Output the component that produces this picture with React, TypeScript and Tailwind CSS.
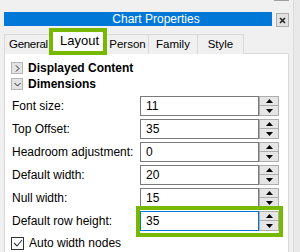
import { ReactNode } from 'react';

const FONT = { fontFamily: '"Liberation Sans", Arial, sans-serif' };

const ROWS = [
  { label: 'Font size:', value: '11' },
  { label: 'Top Offset:', value: '35' },
  { label: 'Headroom adjustment:', value: '0' },
  { label: 'Default width:', value: '20' },
  { label: 'Null width:', value: '15' },
  { label: 'Default row height:', value: '35', focused: true },
];

function Tri({ up }: { up?: boolean }) {
  return (
    <svg width="7" height="4" viewBox="0 0 7 4">
      {up ? <path d="M3.5 0 L7 4 L0 4 Z" fill="#000" /> : <path d="M0 0 L7 0 L3.5 4 Z" fill="#000" />}
    </svg>
  );
}

function Spinner() {
  return (
    <div className="flex flex-col w-[20px] h-[20px]">
      <div className="h-[10px] flex items-center justify-center bg-[#e6e6e6] border border-[#adadad]">
        <Tri up />
      </div>
      <div className="h-[10px] flex items-center justify-center bg-[#e6e6e6] border border-[#adadad] border-t-0">
        <Tri />
      </div>
    </div>
  );
}

function Highlight({ children, className }: { children: ReactNode; className: string }) {
  return (
    <div className="relative">
      {children}
      <span className={`pointer-events-none absolute border-[4px] border-[#77b900] ${className}`} />
    </div>
  );
}

function Row({ label, value, focused }: { label: string; value: string; focused?: boolean }) {
  const field = (
    <div className="flex items-center">
      <div
        className={`w-[119px] h-[20px] bg-white flex items-center pl-[5px] text-[12px] text-black border ${
          focused ? 'border-[#0078d7]' : 'border-[#7a7a7a]'
        }`}
      >
        {value}
      </div>
      <Spinner />
    </div>
  );
  return (
    <div className="flex items-center h-[20px] mb-[3px]">
      <div className="w-[135px] pl-[7px] text-[12px] text-black">{label}</div>
      {focused ? <Highlight className="-left-[4px] -top-[5px] -right-[4px] -bottom-[6px]">{field}</Highlight> : field}
    </div>
  );
}

function Expander({ open, label }: { open?: boolean; label: string }) {
  return (
    <div className="flex items-center h-[16px] pl-[6px]">
      <div className="w-[12px] h-[12px] bg-[#e3e3e3] border border-[#b5b5b5] flex items-center justify-center">
        <svg width="7" height="7" viewBox="0 0 7 7">
          {open ? (
            <path d="M0.5 2 L3.5 5 L6.5 2" stroke="#222" fill="none" strokeWidth="1" />
          ) : (
            <path d="M2 0.5 L5 3.5 L2 6.5" stroke="#222" fill="none" strokeWidth="1" />
          )}
        </svg>
      </div>
      <span className="ml-[5px] text-[12px] font-bold text-black">{label}</span>
    </div>
  );
}

export default function App() {
  return (
    <div className="w-[300px] h-[252px] bg-[#f0f0f0] overflow-hidden flex" style={FONT}>
      <div className="w-[289px] pl-[4px] flex flex-col">
        {/* top strip */}
        <div className="h-[12px] flex justify-end">
          <div className="w-[15px] h-[1px] bg-[#a0a0a0]" />
        </div>

        {/* title bar */}
        <div className="flex items-start h-[15px]">
          <div className="w-[268px] h-[14px] bg-[#0078d7] text-white text-[12px] leading-[14px] text-center pl-[36px]">
            Chart Properties
          </div>
          <div className="ml-[4px] mt-[1px] w-[13px] h-[14px] bg-[#e1e1e1] border border-[#adadad] flex items-center justify-center">
            <svg width="7" height="7" viewBox="0 0 7 7">
              <path d="M1 1 L6 6 M6 1 L1 6" stroke="#222" strokeWidth="1.6" />
            </svg>
          </div>
        </div>

        {/* tabs */}
        <div className="flex items-end h-[27px] text-[11.5px] text-black">
          <div className="w-[46px] h-[20px] bg-[#f0f0f0] border border-b-0 border-[#d9d9d9] flex items-center pl-[4px] tracking-[-0.3px]">
            General
          </div>
          <Highlight className="-left-[1px] -top-[0px] right-0 -bottom-[1px]">
            <div className="w-[57px] h-[26px] bg-white flex items-center justify-center pl-[2px] text-[13px]">Layout</div>
          </Highlight>
          <div className="w-[42px] h-[20px] bg-[#f0f0f0] border border-b-0 border-l-0 border-[#d9d9d9] flex items-center justify-center">
            Person
          </div>
          <div className="w-[49px] h-[20px] bg-[#f0f0f0] border border-b-0 border-l-0 border-[#d9d9d9] flex items-center justify-center">
            Family
          </div>
          <div className="w-[46px] h-[20px] bg-[#f0f0f0] border border-b-0 border-l-0 border-[#d9d9d9] flex items-center justify-center">
            Style
          </div>
          <div className="flex-1 border-b border-[#d9d9d9]" />
        </div>

        {/* panel */}
        <div className="flex-1 bg-white border-x border-[#d9d9d9] pt-[6px]">
          <Expander label="Displayed Content" />
          <Expander open label="Dimensions" />
          <div className="pt-[4px]">
            {ROWS.map(r => (
              <Row key={r.label} {...r} />
            ))}
          </div>
          <div className="flex items-center pl-[6px]">
            <div className="w-[13px] h-[13px] border border-[#333] bg-white flex items-center justify-center">
              <svg width="10" height="8" viewBox="0 0 10 8">
                <path d="M1 4 L4 7 L9 1" stroke="#333" fill="none" strokeWidth="1.1" />
              </svg>
            </div>
            <span className="ml-[5px] text-[12px] text-black">Auto width nodes</span>
          </div>
        </div>
      </div>
      <div className="flex-1 flex justify-end">
        <div className="w-[7px] h-full border-l border-[#dcdcdc] bg-[#e9e9e9]" />
      </div>
    </div>
  );
}
